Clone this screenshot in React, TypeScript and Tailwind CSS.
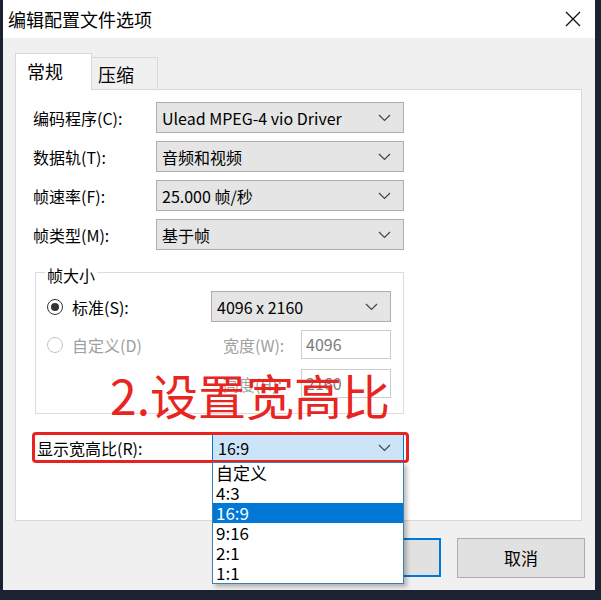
import React from "react";

const Chevron = () => (
  <svg width="13" height="8" viewBox="0 0 13 8" fill="none">
    <path d="M1 1l5.5 5.5L12 1" stroke="#444" strokeWidth="1.2" />
  </svg>
);

interface ComboProps {
  value: string;
  className?: string;
  active?: boolean;
}

const Combo: React.FC<ComboProps> = ({ value, className = "", active }) => (
  <div
    className={`flex items-center justify-between pl-[5px] pr-[12px] border text-[16px] text-black ${
      active ? "bg-[#cce4f7] border-[#0078d7]" : "bg-[#e5e5e5] border-[#adadad]"
    } ${className}`}
  >
    <span>{value}</span>
    <Chevron />
  </div>
);

const Row: React.FC<{ label: string; value: string }> = ({ label, value }) => (
  <div className="flex items-center h-[31px]">
    <span className="w-[123px] text-[16px]">{label}</span>
    <Combo value={value} className="w-[248px] h-[31px]" />
  </div>
);

const ratios = ["自定义", "4:3", "16:9", "9:16", "2:1", "1:1"];

export default function App() {
  return (
    <div className="w-[601px] h-[600px] bg-[#1b2231] pl-[3px] font-['Noto_Sans_CJK_SC',sans-serif] text-black">
      <div className="w-[592px] h-[590px] bg-[#f0f0f0] flex flex-col">
        {/* title bar */}
        <div className="h-[38px] shrink-0 bg-white flex items-center justify-between pl-[5px] pr-[14px]">
          <span className="text-[18px]">编辑配置文件选项</span>
          <svg width="16" height="16" viewBox="0 0 16 16">
            <path d="M1 1l14 14M15 1L1 15" stroke="#111" strokeWidth="1.3" />
          </svg>
        </div>

        <div className="flex flex-col pl-[12px] pt-[15px]">
          {/* tabs */}
          <div className="flex items-end h-[37px] relative z-10">
            <div className="w-[77px] h-[37px] bg-white border border-b-0 border-[#d9d9d9] pl-[11px] pt-[4px] text-[18px] leading-[26px]">
              常规
            </div>
            <div className="w-[66px] h-[33px] border border-l-0 border-[#d9d9d9] pl-[6px] pt-[3px] text-[18px] leading-[26px]">
              压缩
            </div>
          </div>

          {/* panel */}
          <div className="relative -mt-[1px] w-[567px] h-[432px] bg-white border border-[#d9d9d9] pt-[12px] pl-[17px]">
            <div className="flex flex-col gap-[8px]">
              <Row label="编码程序(C):" value="Ulead MPEG-4 vio Driver" />
              <Row label="数据轨(T):" value="音频和视频" />
              <Row label="帧速率(F):" value="25.000 帧/秒" />
              <Row label="帧类型(M):" value="基于帧" />
            </div>

            <fieldset className="ml-[2px] mt-[11px] w-[369px] border border-[#dcdcdc] pl-[11px] pb-[15px]">
              <legend className="-ml-[2px] px-[2px] pt-[6px] text-[16px] leading-[16px]">帧大小</legend>
              <div className="mt-[8px] flex items-center h-[31px]">
                <div className="w-[164px] flex items-center">
                  <span className="w-[16px] h-[16px] rounded-full border border-[#333] flex items-center justify-center">
                    <span className="w-[8px] h-[8px] rounded-full bg-[#333]" />
                  </span>
                  <span className="ml-[9px] text-[16px]">标准(S):</span>
                </div>
                <Combo value="4096 x 2160" className="w-[180px] h-[31px]" />
              </div>
              <div className="mt-[8px] flex items-center h-[29px]">
                <div className="w-[176px] flex items-center">
                  <span className="w-[16px] h-[16px] rounded-full border border-[#c4c4c4]" />
                  <span className="ml-[9px] text-[16px] text-[#a0a0a0]">自定义(D)</span>
                </div>
                <span className="w-[78px] text-[16px] text-[#a0a0a0]">宽度(W):</span>
                <div className="w-[90px] h-[29px] border border-[#cccccc] pl-[4px] text-[16px] leading-[27px] text-[#7a7a7a]">
                  4096
                </div>
              </div>
              <div className="mt-[10px] flex items-center h-[29px]">
                <div className="w-[176px]" />
                <span className="w-[78px] text-[16px] text-[#a0a0a0]">高度(H):</span>
                <div className="w-[90px] h-[29px] border border-[#cccccc] pl-[4px] text-[16px] leading-[27px] text-[#7a7a7a]">
                  2160
                </div>
              </div>
            </fieldset>

            {/* annotation */}
            <div className="absolute left-[94px] top-[280px] text-[48px] leading-none text-[#e8251f] whitespace-nowrap">
              2.设置宽高比
            </div>

            <div className="relative mt-[20px] w-[371px] flex items-center h-[28px]">
              <span className="ml-[4px] w-[175px] text-[16px]">显示宽高比(R):</span>
              <Combo value="16:9" active className="w-[192px] h-[28px]" />
              <div className="absolute -left-[1px] -top-[2px] w-[377px] h-[31px] border-[3px] border-[#e8231f] rounded-[4px] pointer-events-none" />
              <div className="absolute z-20 top-[28px] left-[179px] w-[192px] bg-white border border-[#3c7fb1] shadow-[3px_3px_4px_rgba(0,0,0,0.25)]">
                {ratios.map((r) => (
                  <div
                    key={r}
                    className={`h-[20px] leading-[20px] pl-[3px] text-[17px] ${
                      r === "16:9" ? "bg-[#0078d7] text-white" : "text-black"
                    }`}
                  >
                    {r}
                  </div>
                ))}
              </div>
            </div>
          </div>

          {/* buttons */}
          <div className="flex gap-[16px] pl-[298px] mt-[17px]">
            <div className="w-[128px] h-[39px] border-2 border-[#0078d7] bg-[#e1e1e1] flex items-center justify-center text-[17px]">
              确定
            </div>
            <div className="w-[128px] h-[40px] border border-[#adadad] bg-[#e1e1e1] flex items-center justify-center text-[17px]">
              取消
            </div>
          </div>
        </div>
      </div>
    </div>
  );
}
